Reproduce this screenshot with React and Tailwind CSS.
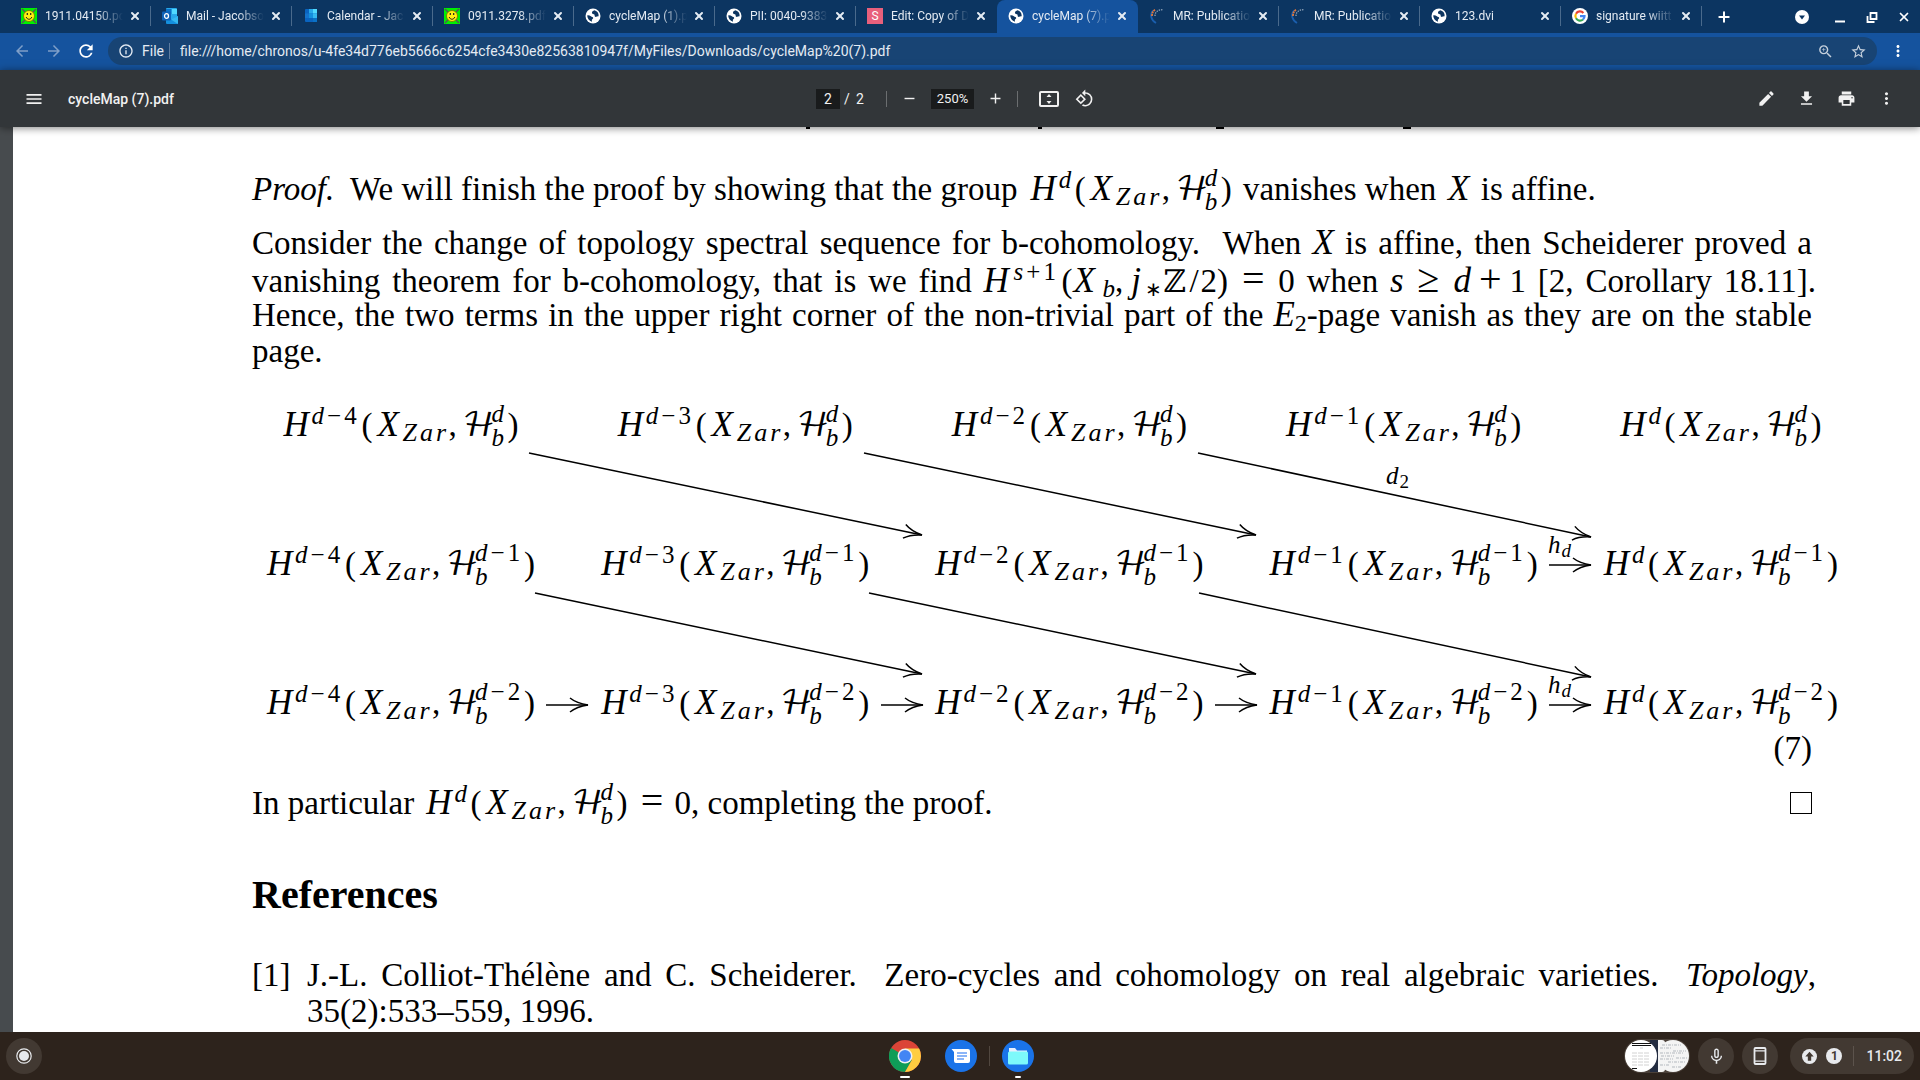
import {
  MdArrowBack, MdArrowForward, MdRefresh, MdInfoOutline, MdZoomIn, MdStarBorder, MdMoreVert, MdMenu,
  MdEdit, MdDownload, MdPrint, MdRotate90DegreesCcw, MdAdd, MdRemove, MdMicNone,
} from 'react-icons/md';
import { X, Plus } from 'lucide-react';

/* ---------- favicons ---------- */

function Smiley() {
  return (
    <svg viewBox="0 0 16 16" className="h-4 w-4">
      <rect width="16" height="16" fill="#00f000" />
      <path d="M1 1l4 4M15 1l-4 4M1 15l4-4M15 15l-4-4" stroke="#555" strokeWidth="1.5" />
      <circle cx="8" cy="8" r="5.5" fill="#ffee10" stroke="#7a6a00" strokeWidth=".8" />
      <path d="M5.2 9c1 3 4.600 3 5.600 0" fill="none" stroke="#222" strokeWidth="1" />
      <path d="M6.300 5v2M9.700 5v2" stroke="#222" strokeWidth="1.200" />
    </svg>
  );
}

function Outlook() {
  return (
    <svg viewBox="0 0 16 16" className="h-4 w-4">
      <rect x="4" y="0" width="11" height="11" rx="1" fill="#28a8ea" />
      <rect x="9.500" y="1" width="5.500" height="5" fill="#50d9ff" />
      <rect x="4" y="1" width="5.500" height="5" fill="#0a72c8" />
      <path d="M4 8l6 3.500L16 8v7a1 1 0 0 1-1 1H5a1 1 0 0 1-1-1z" fill="#1490df" />
      <path d="M16 8v8L9 11.500z" fill="#35b8f1" />
      <rect x="0" y="3.500" width="9" height="9" rx="1" fill="#0f63b8" />
      <ellipse cx="4.500" cy="8" rx="2" ry="2.300" fill="none" stroke="#fff" strokeWidth="1.300" />
    </svg>
  );
}

function CalendarIcon() {
  return (
    <svg viewBox="0 0 16 16" className="h-4 w-4">
      <rect x="2" y="1" width="12" height="13" rx="1" fill="#0a64c0" />
      <rect x="6" y="1" width="4" height="4.500" fill="#28a8ea" />
      <rect x="10" y="1" width="4" height="4.500" fill="#50d9ff" />
      <rect x="6" y="5.500" width="4" height="4.500" fill="#1490df" />
      <rect x="10" y="5.500" width="4" height="4.500" fill="#35b8f1" />
      <rect x="2" y="5.500" width="4" height="4.500" fill="#1473cc" />
      <rect x="10" y="10" width="4" height="4" fill="#0a72c8" />
    </svg>
  );
}

function Globe() {
  return (
    <svg viewBox="0 0 16 16" className="h-4 w-4">
      <circle cx="8" cy="8" r="7.500" fill="#fff" />
      <path d="M9.500 2.300C8 2.800 6.800 3.500 7 5c.2 1.200 1.800.8 2.400 1.600.6.900-.2 1.700.8 2.200 1 .4 2-.6 3.400-.4a5.800 5.800 0 0 0-4.100-6.100z" fill="#0d3560" />
      <path d="M2.300 7.200c1.400-.2 2.600.2 3.600 1 .8.700 2.200.6 2.300 1.700.1 1-1.300 1.100-1.400 2.100 0 .6.200 1.100.2 1.700A6 6 0 0 1 2.300 7.200z" fill="#0d3560" />
    </svg>
  );
}

function LetterS() {
  return <span className="flex h-4 w-4 items-center justify-center bg-[#e8607c] text-xs text-white">S</span>;
}

function MathReviews() {
  return (
    <svg viewBox="0 0 16 16" className="h-4 w-4" fill="none">
      <path d="M7 15C2 12 .500 7 4 2.500" stroke="#1b5fae" strokeWidth="1.800" />
      <path d="M3 8c0-3 1-5 3.500-6.500" stroke="#e0763a" strokeWidth="1.800" strokeDasharray="2 .600" />
      <path d="M6 8c0-3.500 2-6 8-6.500" stroke="#8fa3b8" strokeWidth="1.300" strokeDasharray="1.400 1" />
    </svg>
  );
}

function GoogleG() {
  return (
    <svg viewBox="0 0 16 16" className="h-4 w-4">
      <circle cx="8" cy="8" r="8" fill="#fff" />
      <g fill="none" strokeWidth="2.200">
        <path d="M11.400 5A4.600 4.600 0 0 0 4 5.700" stroke="#ea4335" />
        <path d="M4 5.700a4.600 4.600 0 0 0 0 4.600" stroke="#fbbc05" />
        <path d="M4 10.300a4.600 4.600 0 0 0 7 1.200" stroke="#34a853" />
        <path d="M11 11.500c1-.9 1.500-2 1.500-3.300H8" stroke="#4285f4" />
      </g>
    </svg>
  );
}

const tabs = [
  { title: '1911.04150.pd', Icon: Smiley },
  { title: 'Mail - Jacobso', Icon: Outlook },
  { title: 'Calendar - Jac', Icon: CalendarIcon },
  { title: '0911.3278.pdf', Icon: Smiley },
  { title: 'cycleMap (1).p', Icon: Globe },
  { title: 'PII: 0040-9383', Icon: Globe },
  { title: 'Edit: Copy of D', Icon: LetterS },
  { title: 'cycleMap (7).p', Icon: Globe, active: true },
  { title: 'MR: Publicatio', Icon: MathReviews },
  { title: 'MR: Publicatio', Icon: MathReviews },
  { title: '123.dvi', Icon: Globe },
  { title: 'signature wiitt', Icon: GoogleG },
];

function Tab({ title, Icon, active, divider }) {
  return (
    <div className={active
      ? 'flex h-full w-[141px] items-center rounded-t-lg bg-[#15539e] pr-2 pb-px pl-[11px]'
      : 'flex h-full w-[141px] items-center pr-2 pb-px pl-[11px]'}>
      <Icon />
      <span className="ml-2 min-w-0 flex-1 overflow-hidden whitespace-nowrap [mask-image:linear-gradient(to_right,black_65%,transparent)]">
        {title}
      </span>
      <button aria-label={'Close ' + title} className="ml-1 flex h-4 w-4 items-center justify-center">
        <X size={12} strokeWidth={4} />
      </button>
      <span className={divider ? '-mr-2 ml-[7px] h-5 w-px bg-[#4a6a8c]' : '-mr-2 ml-[7px] h-5 w-px'} />
    </div>
  );
}

function TabStrip() {
  return (
    <div className="flex h-[33px] items-center bg-[#0c3561] pl-[10px] text-xs text-[#e4ebf3]">
      {tabs.map((t, i) => (
        <Tab key={i} {...t} divider={!t.active && !(tabs[i + 1] && tabs[i + 1].active)} />
      ))}
      <button aria-label="New tab" className="ml-[14px] text-white"><Plus size={16} strokeWidth={3} /></button>
      <div className="ml-auto flex items-center gap-4 pr-2 text-white">
        <button aria-label="Search tabs" className="mr-[6px]">
          <svg viewBox="0 0 16 16" className="h-4 w-4"><circle cx="8" cy="8" r="7" fill="#fff" /><path d="M5 6.500h6L8 10.500z" fill="#0c3561" /></svg>
        </button>
        <button aria-label="Minimize">
          <svg viewBox="0 0 16 16" className="h-4 w-4"><path d="M3 12.500h10" stroke="#fff" strokeWidth="2" /></svg>
        </button>
        <button aria-label="Restore">
          <svg viewBox="0 0 16 16" className="h-4 w-4" fill="none" stroke="#fff" strokeWidth="1.800"><path d="M6.500 4h6v6h-6zM3.500 7v6h7" /></svg>
        </button>
        <button aria-label="Close window" className="flex w-4 justify-center"><X size={14} strokeWidth={3} /></button>
      </div>
    </div>
  );
}

function AddressBar() {
  return (
    <div className="flex h-[37px] items-center bg-[#15539e] pr-[13px] pb-px pl-[13px] text-sm text-[#e4ebf3]">
      <button aria-label="Back" className="text-[#7f9fc8]"><MdArrowBack size={18} /></button>
      <button aria-label="Forward" className="ml-[14px] text-[#7f9fc8]"><MdArrowForward size={18} /></button>
      <button aria-label="Reload" className="ml-[13px] text-white"><MdRefresh size={20} /></button>
      <div className="ml-3 flex h-7 flex-1 items-center rounded-full bg-[#184474] pr-[10px] pl-[10px]">
        <MdInfoOutline size={16} />
        <label htmlFor="url" className="ml-2">File</label>
        <span className="mr-[10px] ml-[5px] h-4 w-px bg-[#5d7ca0]" />
        <input id="url" className="min-w-0 flex-1 bg-transparent outline-none"
          defaultValue="file:///home/chronos/u-4fe34d776eb5666c6254cfe3430e82563810947f/MyFiles/Downloads/cycleMap%20(7).pdf" />
        <button aria-label="Zoom" className="mr-4 text-[#c5d0dc]"><MdZoomIn size={17} /></button>
        <button aria-label="Bookmark" className="text-[#c5d0dc]"><MdStarBorder size={17} /></button>
      </div>
      <button aria-label="Menu" className="ml-3 text-white"><MdMoreVert size={18} /></button>
    </div>
  );
}

function PdfHeader() {
  return (
    <header className="z-10 grid h-[57px] grid-cols-3 items-center bg-[#323639] px-6 text-sm text-[#f1f1f1] shadow-[0_1px_8px_rgba(0,0,0,0.5)]">
      <div className="flex items-center gap-6">
        <button aria-label="Sidebar"><MdMenu size={20} /></button>
        <h1 className="font-medium">cycleMap (7).pdf</h1>
      </div>
      <div className="flex items-center justify-center pr-[10px]">
        <input aria-label="Page" defaultValue="2" className="h-5 w-6 bg-[#191b1c] text-center outline-none" />
        <span className="ml-1 w-2">/</span>
        <span className="ml-1 w-2">2</span>
        <span className="mr-[14px] ml-[22px] h-4 w-px bg-[#6b6e70]" />
        <button aria-label="Zoom out"><MdRemove size={17} /></button>
        <input aria-label="Zoom level" defaultValue="250%" className="mx-[13px] h-5 w-[43px] bg-[#191b1c] text-center text-[13px] outline-none" />
        <button aria-label="Zoom in"><MdAdd size={17} /></button>
        <span className="mx-[13px] h-4 w-px bg-[#6b6e70]" />
        <button aria-label="Fit to page" className="ml-2">
          <svg viewBox="0 0 20 16" className="h-4 w-5">
            <rect x="1" y="1" width="18" height="14" rx="1" fill="none" stroke="#f1f1f1" strokeWidth="2" />
            <path d="M10 3l2.500 3h-5zM10 13l2.500-3h-5z" fill="#f1f1f1" />
          </svg>
        </button>
        <button aria-label="Rotate" className="ml-4"><MdRotate90DegreesCcw size={19} /></button>
      </div>
      <div className="flex items-center justify-end gap-[21px]">
        <button aria-label="Annotate"><MdEdit size={19} /></button>
        <button aria-label="Download"><MdDownload size={19} /></button>
        <button aria-label="Print"><MdPrint size={19} /></button>
        <button aria-label="More"><MdMoreVert size={19} /></button>
      </div>
    </header>
  );
}

/* ---------- mathematics ---------- */

function Var({ children }) {
  return <i className="text-[35px] leading-9">{children}</i>;
}

function Exponent({ base, minus }) {
  return (
    <>
      <i>{base}</i>
      {minus && <span className="mx-[3px]">−</span>}
      {minus}
    </>
  );
}

/* H^{d-p}(X_Zar, H_b^{d-q}) */
function Group({ p, q }) {
  return (
    <span className="inline-block whitespace-nowrap text-left">
      <span className="inline-block w-[31px] text-center"><Var>H</Var></span>
      <span className={p
        ? 'inline-block w-[50px] align-[12px] text-[25px] leading-5'
        : 'inline-block w-4 align-[12px] text-[25px] leading-5'}>
        <Exponent base="d" minus={p} />
      </span>
      <span className="inline-block w-3">(</span>
      <span className="inline-block w-[29px] text-center"><Var>X</Var></span>
      <span className="inline-flex w-[46px] gap-[3px] align-[-5px] text-[26px] leading-5 italic">
        <span>Z</span><span>a</span><span>r</span>
      </span>
      <span className="inline-block w-[14px]">,</span>
      <span className="inline-block w-[29px] font-['DejaVu_Math_TeX_Gyre',serif] text-[33px] leading-9">ℋ</span>
      <span className={q
        ? '-mt-2 -mb-2 inline-block w-[49px] align-[-10px] text-[25px] leading-6'
        : '-mt-2 -mb-2 inline-block w-4 align-[-10px] text-[25px] leading-6'}>
        <span className="block"><Exponent base="d" minus={q} /></span>
        <i className="block">b</i>
      </span>
      <span className="inline-block w-3">)</span>
    </span>
  );
}

const rows = [
  ['4', '3', '2', '1', ''].map((p) => ({ p, q: '' })),
  ['4', '3', '2', '1', ''].map((p) => ({ p, q: '1' })),
  ['4', '3', '2', '1', ''].map((p) => ({ p, q: '2' })),
];

const arrows = [
  [529, 453, 922, 535], [864, 453, 1256, 535], [1198, 453, 1591, 537],
  [535, 593, 922, 674], [869, 593, 1256, 674], [1199, 593, 1591, 677],
  [546, 705, 588, 705], [881, 705, 923, 705], [1215, 705, 1257, 705], [1549, 705, 1591, 705],
  [1549, 565, 1591, 565],
];

function Arrow({ from }) {
  const [x1, y1, x2, y2] = from;
  const angle = (Math.atan2(y2 - y1, x2 - x1) * 180) / Math.PI;
  return (
    <g>
      <path d={`M${x1} ${y1}L${x2} ${y2}`} />
      <path d="M-18 -7C-13 -3 -7 -1 0 0C-7 1 -13 3 -18 7" transform={`translate(${x2} ${y2}) rotate(${angle})`} />
    </g>
  );
}

function SpectralSequence() {
  return (
    <div className="relative mt-[37px] -mr-[27px] ml-3">
      <div className="grid grid-cols-[272fr_272fr_272fr_272fr_238fr] gap-x-[62px] gap-y-[103px]">
        {rows.flatMap((row, r) => row.map((cell, c) => (
          <div key={`${r}-${c}`} className="flex h-9 min-w-0 justify-center"><Group {...cell} /></div>
        )))}
      </div>
      <svg viewBox="264 406 1575 314" className="absolute inset-0 h-full w-full overflow-visible" fill="none" stroke="#000" strokeWidth="1.500">
        {arrows.map((a, i) => <Arrow key={i} from={a} />)}
        <g fill="#000" stroke="none" fontSize="25" fontStyle="italic">
          <text x="1386" y="484">d<tspan dy="4" dx="1" fontSize="19" fontStyle="normal">2</tspan></text>
          <text x="1548" y="553">h<tspan dy="4" dx="1" fontSize="19">d</tspan></text>
          <text x="1548" y="693">h<tspan dy="4" dx="1" fontSize="19">d</tspan></text>
        </g>
      </svg>
    </div>
  );
}

function Line({ children, wide }) {
  return (
    <span className={wide
      ? '-mr-1 block h-9 whitespace-nowrap [text-align-last:justify]'
      : 'block h-9 whitespace-nowrap [text-align-last:justify]'}>
      {children}
    </span>
  );
}

function Document() {
  return (
    <main className="flex min-h-0 flex-1 overflow-hidden bg-[#474b4e] pl-[13px]">
      <article className="h-full min-w-0 flex-1 bg-white pr-[108px] pl-[239px] font-['Liberation_Serif',serif] text-[33px] leading-9 text-black">
        <div className="grid h-[2px] grid-cols-[554px_232px_178px_187px_1fr]">
          <span /><i className="h-[2px] w-1 bg-black" /><i className="h-[2px] w-1 bg-black" /><i className="h-[2px] w-2 bg-black" /><i className="h-[2px] w-2 bg-black" />
        </div>
        <p className="mt-[41px] h-9 whitespace-nowrap">
          <i>Proof.</i>&nbsp; We will finish the proof by showing that the group{' '}
          <span className="mx-[2px]"><Group /></span> vanishes when <span className="inline-block w-[28px] text-center"><Var>X</Var></span> is affine.
        </p>
        <p className="mt-[19px]">
          <Line>Consider the change of topology spectral sequence for b-cohomology. &nbsp;When <Var>X</Var> is affine, then Scheiderer proved a</Line>
          <Line wide>
            vanishing theorem for b-cohomology, that is we find{' '}
            <span>
              <span className="inline-block w-[30px] text-center"><Var>H</Var></span>
              <span className="inline-block w-12 align-[12px] text-[25px] leading-5"><i>s</i><span className="mx-[3px]">+</span>1</span>
              <span className="inline-block w-3">(</span>
              <span className="inline-block w-[29px] text-center"><Var>X</Var></span>
              <i className="align-[-5px] text-[25px] leading-5">b</i>
              <span className="mr-2">,</span>
              <Var>j</Var>
              <span className="ml-1 align-[-4px] text-[20px] leading-5">∗</span>
              <span className="font-['DejaVu_Math_TeX_Gyre',serif] text-[31px] leading-9">ℤ</span><span className="mx-[2px]">/</span>2)
            </span>{' '}
            <span className="mx-[2px] text-[40px] leading-9">=</span> 0 when <Var>s</Var>{' '}
            <span className="mx-[2px] text-[40px] leading-9">≥</span>{' '}
            <span>
              <Var>d</Var><span className="mx-2 text-[40px] leading-9">+</span>1
            </span>{' '}
            [2, Corollary 18.11].
          </Line>
          <Line>
            Hence, the two terms in the upper right corner of the non-trivial part of the{' '}
            <span><Var>E</Var><span className="align-[-5px] text-[24px] leading-5">2</span>-page</span> vanish as they are on the stable
          </Line>
          <span className="block h-9">page.</span>
        </p>
        <SpectralSequence />
        <p className="mt-[10px] text-right">(7)</p>
        <div className="mt-[19px] flex h-9 items-center justify-between whitespace-nowrap">
          <p>
            In particular <span className="mx-px"><Group /></span>{' '}
            <span className="mx-[3px] text-[40px] leading-9">=</span> 0, completing the proof.
          </p>
          <span className="h-[22px] w-[22px] border border-black" />
        </div>
        <h2 className="mt-[50px] text-[40px] leading-12 font-bold">References</h2>
        <div className="mt-[38px] flex">
          <span className="w-[55px]">[1]</span>
          <p className="min-w-0 flex-1">
            <Line wide>J.-L. Colliot-Thélène and C. Scheiderer. &nbsp;Zero-cycles and cohomology on real algebraic varieties. &nbsp;<i>Topology</i>,</Line>
            <span className="block h-9">35(2):533–559, 1996.</span>
          </p>
        </div>
      </article>
    </main>
  );
}

/* ---------- shelf ---------- */

function ChromeLogo() {
  return (
    <svg viewBox="0 0 32 32" className="h-8 w-8">
      <circle cx="16" cy="16" r="16" fill="#db4437" />
      <path d="M2.140 8A16 16 0 0 0 16 32L22.930 20z" fill="#0f9d58" />
      <path d="M16 8.500h14.100A16 16 0 0 1 16 32l6.900-12z" fill="#ffcd40" />
      <circle cx="16" cy="16" r="7.500" fill="#f1f1f1" />
      <circle cx="16" cy="16" r="6" fill="#4285f4" />
    </svg>
  );
}

function MessagesLogo() {
  return (
    <svg viewBox="0 0 32 32" className="h-8 w-8">
      <circle cx="16" cy="16" r="16" fill="#1a73e8" />
      <path d="M6.500 9H23a2 2 0 0 1 2 2v10a2 2 0 0 1-2 2H11a2 2 0 0 1-2-2V12z" fill="#fff" />
      <path d="M12 13h10M12 16h10M12 19h7" stroke="#669df6" strokeWidth="1.500" />
    </svg>
  );
}

function FilesLogo() {
  return (
    <svg viewBox="0 0 32 32" className="h-8 w-8">
      <circle cx="16" cy="16" r="16" fill="#1a73e8" />
      <path d="M7 8h6l2 2.500h10V14H7z" fill="#e8f0fe" />
      <rect x="6" y="11.500" width="20" height="13" rx="1.500" fill="#7df9fb" />
    </svg>
  );
}

function Previews() {
  return (
    <svg viewBox="0 0 66 34" className="h-[34px] w-[66px]">
      <rect width="66" height="34" rx="17" fill="#4a4039" />
      <circle cx="49" cy="17" r="16" fill="#f4f4f4" />
      <rect x="27" y="1" width="14" height="32" rx="3" fill="#f4f4f4" />
      <rect x="26" y="1" width="8" height="32" fill="#232c40" />
      <circle cx="17" cy="17" r="16" fill="#fff" />
      <path d="M8 4.500h19M8 6.500h19" stroke="#111" />
      <path d="M16 9h3M8 14h18M8 17h18M8 20h18M8 23h17M8 26h18" stroke="#d2d2d2" strokeDasharray="5 1" />
      <path d="M8 29.500h5" stroke="#111" />
      <path d="M38 6h19M36 9h12M49 12h13M36 14h24M37 17h13M52 19h11M36 20h13M44 23h18M36 26h10M48 28h9" stroke="#b3b8be" strokeDasharray="3 1 1 1" />
    </svg>
  );
}

function Shelf() {
  return (
    <footer className="grid h-12 grid-cols-[1fr_auto_1fr] items-center bg-[#2d231c] pr-[6px] pl-[6px] text-[#e8eaed]">
      <button aria-label="Launcher" className="flex h-9 w-9 items-center justify-center rounded-full bg-[#423932]">
        <svg viewBox="0 0 16 16" className="h-4 w-4"><circle cx="8" cy="8" r="7.200" fill="none" stroke="#e8eaed" strokeWidth="1.200" /><circle cx="8" cy="8" r="5" fill="#e8eaed" /></svg>
      </button>
      <div className="flex h-12 items-center pl-[2px]">
        <button aria-label="Chrome" className="flex h-12 flex-col items-center gap-1 pt-2"><ChromeLogo /><span className="h-[2px] w-[10px] rounded bg-white" /></button>
        <button aria-label="Messages" className="ml-6 flex h-12 flex-col items-center gap-1 pt-2"><MessagesLogo /></button>
        <span className="mr-3 ml-3 h-5 w-px bg-[#51473f]" />
        <button aria-label="Files" className="flex h-12 flex-col items-center gap-1 pt-2"><FilesLogo /><span className="h-[2px] w-[6px] rounded bg-white" /></button>
      </div>
      <div className="flex items-center justify-end gap-2">
        <button aria-label="Recent files"><Previews /></button>
        <button aria-label="Microphone" className="flex h-9 w-9 items-center justify-center rounded-full bg-[#423932]"><MdMicNone size={19} /></button>
        <button aria-label="Phone" className="flex h-9 w-9 items-center justify-center rounded-full bg-[#423932]">
          <svg viewBox="0 0 14 18" className="h-[18px] w-[14px]" fill="none" stroke="#e8eaed">
            <rect x="1.500" y="1" width="11" height="16" rx="1" strokeWidth="1.800" />
            <path d="M1 3.800h12M1 14.200h12" strokeWidth="1.300" />
          </svg>
        </button>
        <button className="ml-1 flex h-9 items-center rounded-full bg-[#423932] pr-3 pl-3">
          <svg viewBox="0 0 16 16" className="h-[15px] w-[15px]"><circle cx="8" cy="8" r="8" fill="#e8eaed" /><path d="M8 3l4.500 5H9.800v4.500H6.200V8H3.500z" fill="#423932" /></svg>
          <span className="ml-[9px] flex h-4 w-4 items-center justify-center rounded-full bg-[#e8eaed] text-xs font-bold text-[#423932]">1</span>
          <span className="mr-3 ml-[11px] h-5 w-px bg-[#5c534c]" />
          <span className="text-sm font-medium">11:02</span>
        </button>
      </div>
    </footer>
  );
}

export default function App() {
  return (
    <div className="flex h-screen flex-col overflow-hidden font-[Roboto,sans-serif]">
      <TabStrip />
      <AddressBar />
      <PdfHeader />
      <Document />
      <Shelf />
    </div>
  );
}
